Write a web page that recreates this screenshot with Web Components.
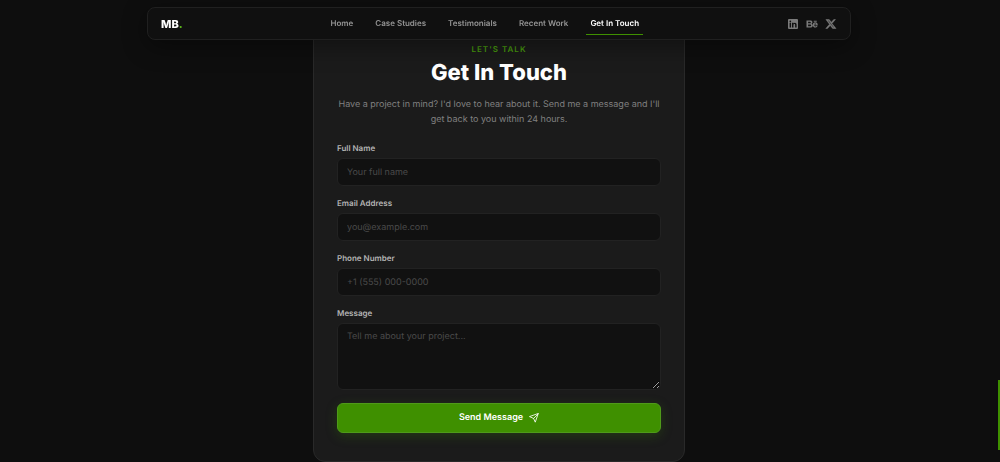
<!DOCTYPE html>
<html lang="en">
<head>
<meta charset="utf-8">
<meta name="viewport" content="width=device-width, initial-scale=1">
<title>Get In Touch</title>
<style>
  :root {
    --green: #3f9000;
    --page: #0e0e0e;
    --field: #111111;
    --line: #292929;
    --muted: #808080;
  }

  body {
    margin: 0;
    padding-right: 2px;
    background: var(--page);
    color: #ffffff;
    font-family: Inter, "Liberation Sans", sans-serif;
    font-size: 9px;
    text-rendering: geometricPrecision;
    overflow: hidden;
  }
</style>
</head>
<body>
  <mb-navbar>
    <mb-nav-link href="#home">Home</mb-nav-link>
    <mb-nav-link href="#case-studies">Case Studies</mb-nav-link>
    <mb-nav-link href="#testimonials">Testimonials</mb-nav-link>
    <mb-nav-link href="#recent-work">Recent Work</mb-nav-link>
    <mb-nav-link href="#contact" active>Get In Touch</mb-nav-link>
    <mb-social-links slot="social"></mb-social-links>
  </mb-navbar>

  <mb-contact-card>
    <span slot="eyebrow">LET'S TALK</span>
    <span slot="title">Get In Touch</span>
    <span slot="intro">Have a project in mind? I'd love to hear about it. Send me a message and I'll get back to you within 24 hours.</span>
    <mb-field label="Full Name" type="text" placeholder="Your full name"></mb-field>
    <mb-field label="Email Address" type="email" placeholder="you@example.com"></mb-field>
    <mb-field label="Phone Number" type="tel" placeholder="+1 (555) 000-0000"></mb-field>
    <mb-field label="Message" multiline placeholder="Tell me about your project..."></mb-field>
    <mb-send-button>Send Message</mb-send-button>
  </mb-contact-card>

  <mb-scroll-thumb></mb-scroll-thumb>

<script>
class MBNavbar extends HTMLElement {
  constructor() {
    super();
    this.attachShadow({ mode: 'open' });
    this.shadowRoot.innerHTML = `
      <style>
        :host {
          display: block;
          position: fixed;
          z-index: 10;
          top: 7px;
          left: 0;
          right: 2px;
        }
        header {
          box-sizing: border-box;
          width: min(704px, 100% - 32px);
          margin: 0 auto;
          padding: 4px 13px;
          display: flex;
          align-items: center;
          justify-content: space-between;
          background: #101010;
          border: 1px solid #202020;
          border-radius: 8px;
          box-shadow: 0 6px 24px rgba(0, 0, 0, 0.4);
        }
        .logo {
          color: #ffffff;
          font-size: 11px;
          font-weight: 800;
          text-decoration: none;
        }
        .logo span {
          color: #5cb81a;
        }
        nav {
          display: flex;
          gap: 14px;
        }
      </style>
      <header>
        <a class="logo" href="#home">MB<span>.</span></a>
        <nav><slot></slot></nav>
        <slot name="social"></slot>
      </header>
    `;
  }
}

class MBNavLink extends HTMLElement {
  constructor() {
    super();
    this.attachShadow({ mode: 'open' });
    this.shadowRoot.innerHTML = `
      <style>
        :host {
          display: block;
        }
        a {
          display: block;
          padding: 4px 4px 3px;
          border-bottom: 1px solid transparent;
          color: #949494;
          font-size: 8px;
          font-weight: 600;
          line-height: 15px;
          text-decoration: none;
        }
        :host([active]) a {
          color: #ffffff;
          border-bottom-color: var(--green);
        }
      </style>
      <a><slot></slot></a>
    `;
  }

  connectedCallback() {
    this.shadowRoot.querySelector('a').href = this.getAttribute('href');
  }
}

class MBSocialLinks extends HTMLElement {
  constructor() {
    super();
    this.attachShadow({ mode: 'open' });
    this.shadowRoot.innerHTML = `
      <style>
        :host {
          display: flex;
          gap: 7px;
        }
        a {
          color: #7a7a7a;
        }
        svg {
          display: block;
          width: 12px;
          height: 12px;
          fill: currentColor;
        }
      </style>
      <a href="#linkedin" aria-label="LinkedIn">
        <svg viewBox="0 0 24 24"><path fill-rule="evenodd" d="M4 2h16a2 2 0 0 1 2 2v16a2 2 0 0 1-2 2H4a2 2 0 0 1-2-2V4a2 2 0 0 1 2-2zm1.200 7.500V19h2.900V9.500zM6.650 4.900a1.700 1.700 0 1 0 0 3.400 1.700 1.700 0 0 0 0-3.400zM10 9.500V19h2.900v-5c0-1.300.6-2.200 1.800-2.200s1.600.9 1.600 2.300V19h2.900v-5.600c0-2.700-1.300-4.100-3.400-4.100-1.400 0-2.300.7-2.900 1.600V9.500z"/></svg>
      </a>
      <a href="#behance" aria-label="Behance">
        <svg viewBox="0 0 24 24"><path fill-rule="evenodd" d="M1 5h7.500c2.700 0 4.400 1.200 4.400 3.500 0 1.500-.8 2.500-2 3 1.700.5 2.600 1.700 2.600 3.500 0 2.700-2.100 4-4.900 4H1zm3.200 2.400v3.300h3.600c1.200 0 1.900-.5 1.900-1.700s-.7-1.600-1.900-1.600zm0 5.500v3.700H8c1.400 0 2.200-.6 2.200-1.900S9.400 12.900 8 12.900zM15.500 5.500h6v1.800h-6zM18.600 8.700c3.300 0 5 2.500 4.800 5.900h-7.100c.1 1.500 1 2.300 2.400 2.300 1 0 1.700-.5 2-1.200h2.500c-.7 2.300-2.300 3.500-4.600 3.500-3.200 0-5.100-2.200-5.100-5.200s2-5.300 5.100-5.300zm-2.200 4.200h4.300c-.2-1.300-.9-2-2.100-2s-2 .8-2.200 2z"/></svg>
      </a>
      <a href="#x" aria-label="X">
        <svg viewBox="0 0 24 24"><path fill-rule="evenodd" d="M17.600 3h3.300l-7 8L22 21h-6.600l-4.900-6.200L4.900 21H1.600l7.400-8.600L1.800 3h6.600l4.300 5.700zm-1.200 16h1.900L7.500 5H5.500z" stroke="currentColor"/></svg>
      </a>
    `;
  }
}

class MBContactCard extends HTMLElement {
  constructor() {
    super();
    this.attachShadow({ mode: 'open' });
    this.shadowRoot.innerHTML = `
      <style>
        :host {
          display: block;
          padding: 19px 16px;
        }
        section {
          box-sizing: border-box;
          max-width: 372px;
          margin: 0 auto;
          padding: 24px 23px 28px;
          background: #1b1b1b;
          border: 1px solid var(--line);
          border-radius: 12px;
        }
        .head {
          padding-bottom: 15px;
          text-align: center;
        }
        .eyebrow {
          margin: 0;
          color: #479c0c;
          font-size: 8px;
          font-weight: 600;
          letter-spacing: 1px;
          line-height: 10px;
        }
        h2 {
          margin: 5px 0 10px;
          font-size: 22px;
          font-weight: 800;
          line-height: 28px;
        }
        .intro {
          margin: 0 auto;
          color: var(--muted);
          font-size: 9px;
          line-height: 15px;
        }
        form {
          display: flex;
          flex-direction: column;
          gap: 11px;
        }
      </style>
      <section>
        <div class="head">
          <p class="eyebrow"><slot name="eyebrow"></slot></p>
          <h2><slot name="title"></slot></h2>
          <p class="intro"><slot name="intro"></slot></p>
        </div>
        <form><slot></slot></form>
      </section>
    `;
  }
}

class MBField extends HTMLElement {
  constructor() {
    super();
    this.attachShadow({ mode: 'open' });
    this.shadowRoot.innerHTML = `
      <style>
        :host {
          display: flex;
          flex-direction: column;
          gap: 4px;
        }
        label {
          color: #b4b4b4;
          font-size: 8px;
          font-weight: 600;
          line-height: 12px;
        }
        input,
        textarea {
          box-sizing: border-box;
          display: block;
          width: 100%;
          margin: 0;
          padding: 6px 9px;
          background: var(--field);
          border: 1px solid #222222;
          border-radius: 6px;
          outline: none;
          color: #ffffff;
          font: inherit;
          line-height: 14px;
          text-rendering: inherit;
        }
        input {
          height: 28px;
        }
        textarea {
          height: 67px;
          resize: vertical;
        }
        ::placeholder {
          color: #4a4a4a;
        }
      </style>
      <label for="control"></label>
    `;
  }

  connectedCallback() {
    const control = document.createElement(this.hasAttribute('multiline') ? 'textarea' : 'input');
    control.id = 'control';
    control.placeholder = this.getAttribute('placeholder');
    if (this.hasAttribute('type')) {
      control.type = this.getAttribute('type');
    }
    this.shadowRoot.querySelector('label').textContent = this.getAttribute('label');
    this.shadowRoot.appendChild(control);
  }
}

class MBSendButton extends HTMLElement {
  constructor() {
    super();
    this.attachShadow({ mode: 'open' });
    this.shadowRoot.innerHTML = `
      <style>
        :host {
          display: block;
          padding-top: 2px;
        }
        button {
          width: 100%;
          padding: 8px;
          display: flex;
          align-items: center;
          justify-content: center;
          gap: 6px;
          background: var(--green);
          border: 1px solid #4f9a1a;
          border-radius: 6px;
          box-shadow: 0 3px 12px rgba(63, 144, 0, 0.25);
          color: #ffffff;
          font: inherit;
          font-weight: 600;
          line-height: 12px;
          text-rendering: inherit;
          cursor: pointer;
        }
        svg {
          width: 10px;
          height: 10px;
          fill: none;
          stroke: currentColor;
          stroke-width: 2;
          stroke-linejoin: round;
          stroke-linecap: round;
        }
      </style>
      <button type="submit">
        <slot></slot>
        <svg viewBox="0 0 24 24" aria-hidden="true"><path d="M22 2 15 22 11 13 2 9zM22 2 11 13"/></svg>
      </button>
    `;
  }
}

class MBScrollThumb extends HTMLElement {
  constructor() {
    super();
    this.attachShadow({ mode: 'open' });
    this.shadowRoot.innerHTML = `
      <style>
        :host {
          display: block;
          position: fixed;
          right: 0;
          bottom: 12px;
          width: 2px;
          height: 70px;
          background: var(--green);
        }
      </style>
    `;
  }
}

customElements.define('mb-navbar', MBNavbar);
customElements.define('mb-nav-link', MBNavLink);
customElements.define('mb-social-links', MBSocialLinks);
customElements.define('mb-contact-card', MBContactCard);
customElements.define('mb-field', MBField);
customElements.define('mb-send-button', MBSendButton);
customElements.define('mb-scroll-thumb', MBScrollThumb);
</script>
</body>
</html>
